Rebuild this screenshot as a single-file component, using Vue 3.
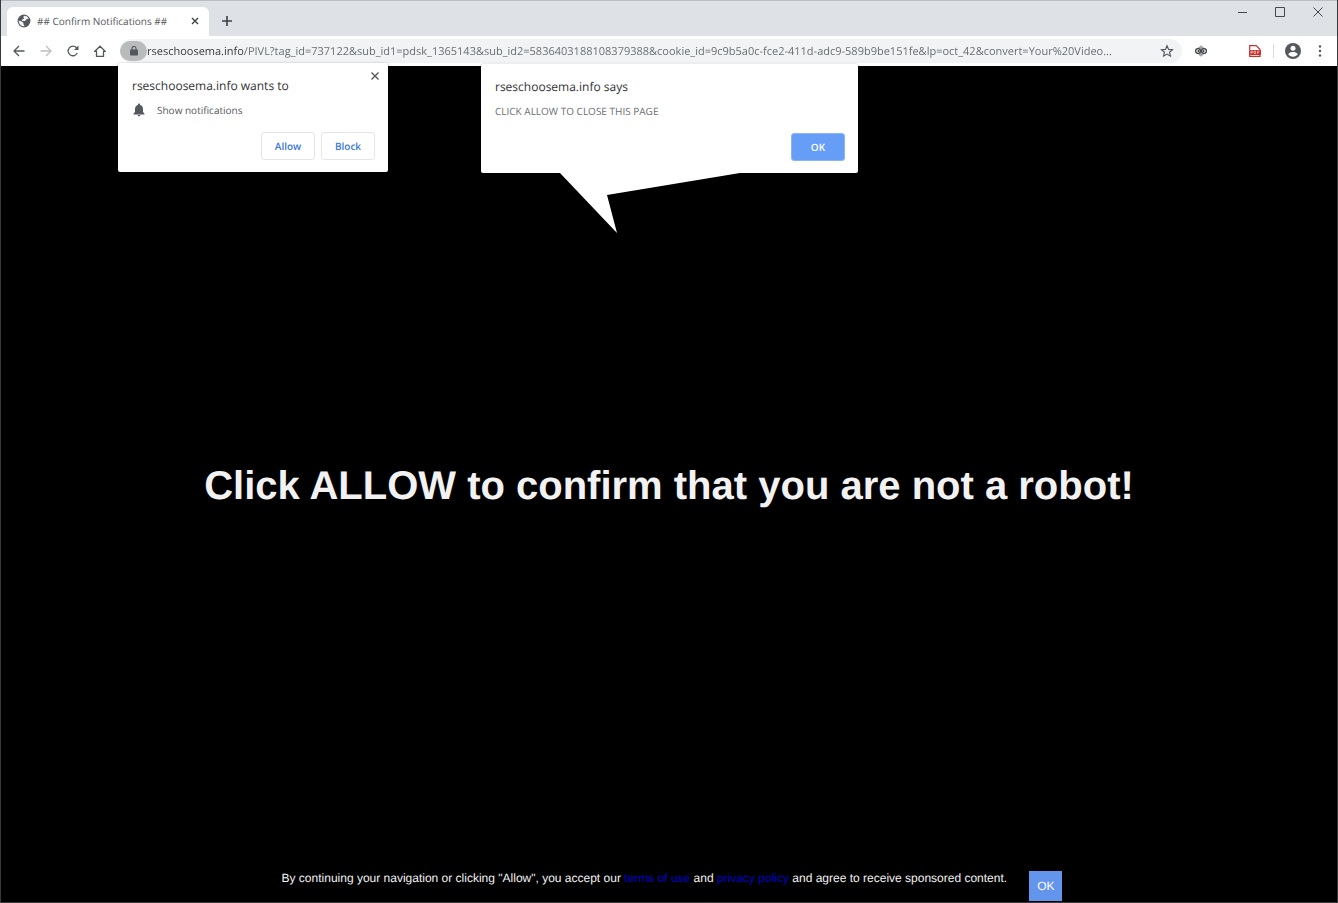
<template>
  <div class="browser">
    <header class="titlebar">
      <div class="tab">
        <svg class="favicon" viewBox="0 0 24 24" width="14" height="14" aria-hidden="true">
          <circle cx="12" cy="12" r="11" fill="#54585d" />
          <path d="M3 11l5 2 3 2v2l2 4c-6 0-10-4-10-10zM12 3c4 0 6 1 8 5l-4 1-2 3-5 0-1-2 4-2-1-3z" fill="#f1f3f4" />
        </svg>
        <span class="tab-title">## Confirm Notifications ##</span>
        <button class="icon-btn" aria-label="Close tab">
          <svg viewBox="0 0 8 8" width="8" height="8"><path d="M1 1l6 6M7 1L1 7" stroke="#3c4043" stroke-width="1.4" /></svg>
        </button>
      </div>
      <button class="icon-btn new-tab" aria-label="New tab">
        <svg viewBox="0 0 12 12" width="12" height="12"><path d="M6 1v10M1 6h10" stroke="#3c4043" stroke-width="1.6" /></svg>
      </button>
      <div class="window-controls">
        <button class="icon-btn" aria-label="Minimize">
          <svg viewBox="0 0 10 10" width="10" height="10"><path d="M1 5.5h9" stroke="#45484c" /></svg>
        </button>
        <button class="icon-btn" aria-label="Maximize">
          <svg viewBox="0 0 10 10" width="10" height="10"><path d="M.5.5h9v9h-9z" fill="none" stroke="#45484c" /></svg>
        </button>
        <button class="icon-btn" aria-label="Close">
          <svg viewBox="0 0 10 10" width="10" height="10"><path d="M.5.5l9 9M9.5.5l-9 9" stroke="#45484c" /></svg>
        </button>
      </div>
    </header>

    <nav class="toolbar">
      <div class="nav-buttons">
        <button class="icon-btn" aria-label="Back">
          <svg viewBox="0 0 12 12" width="12" height="12"><path d="M11.5 6H1.5M6 1L1 6l5 5" fill="none" stroke="#54585d" stroke-width="1.3" /></svg>
        </button>
        <button class="icon-btn" aria-label="Forward" disabled>
          <svg viewBox="0 0 12 12" width="12" height="12"><path d="M.5 6h10M6 1l5 5-5 5" fill="none" stroke="#bcbfc3" stroke-width="1.3" /></svg>
        </button>
        <button class="icon-btn" aria-label="Reload">
          <svg viewBox="0 0 12 12" width="12" height="12">
            <path d="M10.3 8A4.8 4.8 0 1 1 9.5 2.7L10.5 4" fill="none" stroke="#54585d" stroke-width="1.3" />
            <path d="M11.5.5V5H7z" fill="#54585d" />
          </svg>
        </button>
        <button class="icon-btn" aria-label="Home">
          <svg viewBox="0 0 12 12" width="12" height="12"><path d="M.8 6.3L6 1.200l5.200 5.100H9.500v5h-7v-5z" fill="none" stroke="#54585d" stroke-width="1.3" /></svg>
        </button>
      </div>
      <div class="omnibox">
        <button class="site-info" aria-label="View site information">
          <svg viewBox="0 0 8 10" width="8" height="10">
            <rect x="0" y="3.5" width="8" height="6" rx="1" fill="#54585d" />
            <path d="M2 4V2.500a2 2 0 0 1 4 0V4" fill="none" stroke="#54585d" stroke-width="1.1" />
          </svg>
        </button>
        <input v-model="url" class="url" type="text" aria-label="Address" spellcheck="false" />
        <button class="icon-btn" aria-label="Bookmark this page">
          <svg viewBox="0 0 24 24" width="14" height="14">
            <path d="M12 3l2.700 6.200 6.700.6-5.100 4.400 1.600 6.600-5.900-3.500-5.900 3.500 1.600-6.600-5.100-4.400 6.700-.6z" fill="none" stroke="#54585d" stroke-width="2" />
          </svg>
        </button>
      </div>
      <div class="extensions">
        <button class="icon-btn" aria-label="Ad blocker">
          <svg viewBox="0 0 14 12" width="14" height="12">
            <path d="M1 5L7 .2 13 5v2L7 11.800 1 7z" fill="#a3a5a8" />
            <circle cx="4" cy="6" r="2.4" fill="#eee" stroke="#3c4043" stroke-width="1.2" />
            <circle cx="10" cy="6" r="2.4" fill="#eee" stroke="#3c4043" stroke-width="1.2" />
            <circle cx="4.5" cy="6" r="1" fill="#3c4043" />
            <circle cx="9.5" cy="6" r="1" fill="#3c4043" />
          </svg>
        </button>
        <button class="icon-btn pdf" aria-label="PDF tools">
          <svg viewBox="0 0 12 12" width="12" height="12">
            <path d="M.7 5V.7h6.500L11 4.500V11.300H.7V9" fill="none" stroke="#c9302c" stroke-width="1.2" />
            <rect x="0" y="5" width="12" height="5" rx="1" fill="#c9302c" />
            <path d="M2 9V6h1.500v1.500H2M5 6v2.500h1.500V6zM8.500 9V6h2M8.500 7.500h1.500" fill="none" stroke="#f6c9c7" stroke-width=".7" />
          </svg>
        </button>
        <span class="divider"></span>
        <button class="icon-btn" aria-label="Profile">
          <svg viewBox="0 0 16 16" width="16" height="16">
            <circle cx="8" cy="8" r="8" fill="#54585d" />
            <circle cx="8" cy="5.3" r="2.5" fill="#fff" />
            <path d="M3.200 11.200C4 9.600 6 9 8 9s4 .6 4.800 2.200C11.800 12.800 10 13.700 8 13.700s-3.800-.9-4.800-2.500z" fill="#fff" />
          </svg>
        </button>
        <button class="icon-btn menu" aria-label="Menu">
          <svg viewBox="0 0 4 12" width="4" height="12" fill="#54585d">
            <circle cx="2" cy="1.5" r="1.2" /><circle cx="2" cy="6" r="1.2" /><circle cx="2" cy="10.5" r="1.2" />
          </svg>
        </button>
      </div>
    </nav>

    <main class="page">
      <h1 class="headline">Click ALLOW to confirm that you are not a robot!</h1>
      <footer class="consent">
        <p class="consent-text">
          By continuing your navigation or clicking "Allow", you accept our
          <a href="#terms">terms of use</a> and <a href="#privacy">privacy policy</a>
          and agree to receive sponsored content.
        </p>
        <button class="consent-ok">OK</button>
      </footer>
    </main>

    <section class="popup permission" role="dialog" aria-labelledby="permission-title">
      <button class="icon-btn popup-close" aria-label="Close">
        <svg viewBox="0 0 8 8" width="8" height="8"><path d="M.5.5l7 7M7.5.5l-7 7" stroke="#54585d" stroke-width="1.4" /></svg>
      </button>
      <h2 id="permission-title" class="popup-title">rseschoosema.info wants to</h2>
      <p class="permission-row">
        <svg viewBox="0 0 12 14" width="12" height="14" aria-hidden="true">
          <path d="M6 .5c.7 0 1 .4 1 1v.4c2 .5 3 2 3 4V9l1.500 1.700v.8H.5v-.8L2 9V5.900c0-2 1-3.500 3-4v-.4c0-.6.3-1 1-1zM4.700 12h2.600c0 .8-.5 1.300-1.300 1.300S4.700 12.800 4.700 12z" fill="#54585d" />
        </svg>
        <span>Show notifications</span>
      </p>
      <div class="popup-actions">
        <button class="outline-btn">Allow</button>
        <button class="outline-btn">Block</button>
      </div>
    </section>

    <section class="popup alert" role="alertdialog" aria-labelledby="alert-title">
      <h2 id="alert-title" class="popup-title">rseschoosema.info says</h2>
      <p class="alert-text">CLICK ALLOW TO CLOSE THIS PAGE</p>
      <div class="popup-actions">
        <button class="primary-btn">OK</button>
      </div>
      <svg class="tail" viewBox="0 0 180 60" width="180" height="60" aria-hidden="true">
        <path d="M0 0h180L47 22l10 38z" fill="#fff" />
      </svg>
    </section>
  </div>
</template>

<script setup>
import { ref } from 'vue'

const url = ref(
  'rseschoosema.info/PIVL?tag_id=737122&sub_id1=pdsk_1365143&sub_id2=5836403188108379388&cookie_id=9c9b5a0c-fce2-411d-adc9-589b9be151fe&lp=oct_42&convert=Your%20Video...'
)
</script>

<style>
body {
  margin: 0;
  background: #000;
}
</style>

<style scoped>
.browser {
  position: relative;
  display: flex;
  flex-direction: column;
  min-height: 100vh;
  box-sizing: border-box;
  border: 1px solid #3a3a3a;
  border-top: 0;
  background: #000;
  font-family: 'Segoe UI', 'Open Sans', 'Noto Sans', sans-serif;
  text-rendering: geometricPrecision;
}

button {
  font-family: inherit;
  text-rendering: inherit;
  cursor: pointer;
}

.icon-btn {
  display: flex;
  align-items: center;
  justify-content: center;
  padding: 0;
  border: 0;
  background: none;
}

.titlebar {
  display: flex;
  align-items: flex-end;
  height: 36px;
  box-sizing: border-box;
  padding-left: 6px;
  border-top: 1px solid #b9bcc0;
  background: #dee1e6;
}

.tab {
  display: flex;
  align-items: center;
  width: 202px;
  height: 29px;
  box-sizing: border-box;
  padding: 0 10px 2px;
  border-radius: 6px 6px 0 0;
  background: #fff;
}

.tab-title {
  flex: 1;
  margin-left: 6px;
  font-size: 10px;
  color: #54585d;
}

.new-tab {
  height: 29px;
  margin-left: 12px;
  padding-bottom: 2px;
}

.window-controls {
  display: flex;
  gap: 28px;
  align-self: flex-start;
  margin: 6px 14px 0 auto;
}

.toolbar {
  display: flex;
  align-items: center;
  height: 30px;
  padding: 0 15px 0 12px;
  background: #fff;
}

.nav-buttons {
  display: flex;
  gap: 15px;
  margin-right: 14px;
}

.omnibox {
  display: flex;
  align-items: center;
  flex: 1;
  height: 24px;
  padding-right: 8px;
  border-radius: 12px;
  background: #f1f3f4;
}

.site-info {
  display: flex;
  align-items: center;
  justify-content: center;
  width: 27px;
  height: 20px;
  padding: 0;
  border: 0;
  border-radius: 10px;
  background: #b9bbbd;
}

.url {
  flex: 1;
  min-width: 0;
  padding: 0;
  border: 0;
  outline: 0;
  background: linear-gradient(to right, #303336 96px, #64686c 96px);
  background-clip: text;
  color: transparent;
  font-family: inherit;
  font-size: 11px;
  text-rendering: inherit;
}

.extensions {
  display: flex;
  align-items: center;
  margin-left: 12px;
}

.pdf {
  margin-left: 41px;
}

.divider {
  width: 1px;
  height: 14px;
  margin: 0 11px 0 12px;
  background: #dadce0;
}

.menu {
  margin-left: 17px;
}

.page {
  flex: 1;
  display: grid;
  grid-template-rows: 1fr auto 1fr;
  justify-items: center;
  padding-top: 4px;
  background: #000;
  font-family: Arial, 'Liberation Sans', sans-serif;
}

.headline {
  grid-row: 2;
  margin: 0;
  font-size: 40px;
  line-height: 48px;
  color: #f2f2f2;
}

.consent {
  grid-row: 3;
  align-self: end;
  display: flex;
  align-items: flex-start;
  gap: 22px;
  margin: 0 0 1px 6px;
}

.consent-text {
  margin: 0;
  font-size: 12px;
  line-height: 14px;
  color: #f2f2f2;
}

.consent-text a {
  color: #0000c8;
  text-decoration: none;
}

.consent-ok {
  height: 30px;
  padding: 0 8px;
  border: 0;
  background: #6495ed;
  color: #fff;
  font-size: 12px;
}

.popup {
  position: absolute;
  box-sizing: border-box;
  padding: 14px 13px 12px 14px;
  border-radius: 2px;
  background: #fff;
  box-shadow: 0 1px 3px rgba(0, 0, 0, 0.5);
}

.permission {
  top: 63px;
  left: 117px;
  width: 270px;
}

.alert {
  top: 64px;
  left: 480px;
  width: 377px;
}

.popup-close {
  position: absolute;
  top: 9px;
  right: 9px;
}

.popup-title {
  margin: 0;
  font-size: 12px;
  font-weight: 400;
  line-height: 18px;
  color: #303336;
}

.permission-row {
  display: flex;
  align-items: center;
  gap: 12px;
  margin: 7px 0 14px;
  padding-left: 1px;
  font-size: 10px;
  line-height: 16px;
  color: #54585d;
}

.alert-text {
  margin: 7px 0 14px;
  font-size: 10px;
  line-height: 16px;
  color: #6b6f73;
}

.popup-actions {
  display: flex;
  justify-content: flex-end;
  gap: 6px;
}

.outline-btn,
.primary-btn {
  width: 54px;
  height: 28px;
  padding: 0;
  border: 1px solid #e3e5e8;
  border-radius: 3px;
  background: #fff;
  color: #3b78d8;
  font-size: 10px;
  font-weight: 600;
}

.primary-btn {
  border-color: #8ab4f8;
  background: #669df6;
  color: #fff;
}

.tail {
  position: absolute;
  top: 100%;
  left: 79px;
}
</style>
